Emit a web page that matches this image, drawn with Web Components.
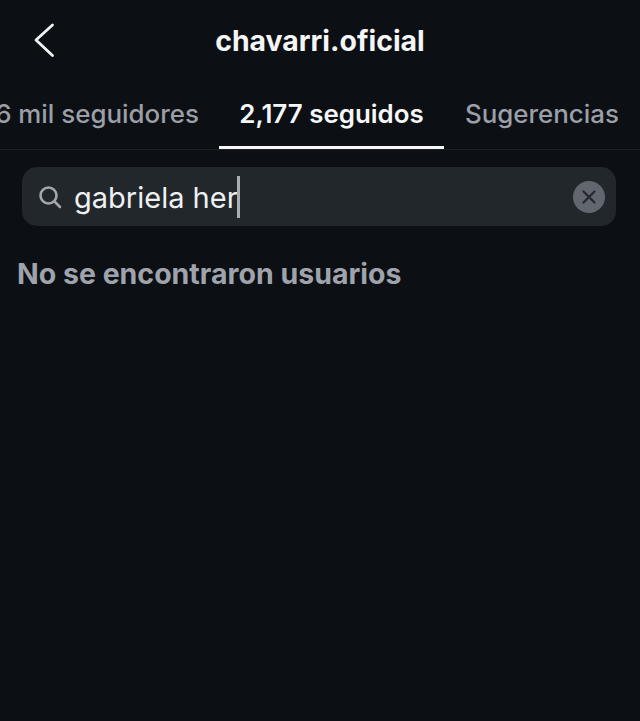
<!DOCTYPE html>
<html>
<head>
<meta charset="utf-8">
<style>
  html, body { margin: 0; height: 100%; background: #0c0f13; overflow: hidden; }
  body { font-family: Inter, "Noto Sans", sans-serif; }
</style>
</head>
<body>
<follow-screen>
  <top-bar title="chavarri.oficial"></top-bar>
  <tab-strip>
    <tab-item style="--w:198px;margin-left:-2px">6 mil seguidores</tab-item>
    <tab-item active style="--w:225px;margin-left:23px">2,177 seguidos</tab-item>
    <tab-item style="--w:154px;margin-left:21px">Sugerencias</tab-item>
  </tab-strip>
  <search-box value="gabriela her"></search-box>
  <empty-note>No se encontraron usuarios</empty-note>
</follow-screen>

<script>
class FollowScreen extends HTMLElement {
  constructor() {
    super();
    this.attachShadow({ mode: "open" });
    this.shadowRoot.innerHTML = `
      <style>
        :host { display: flex; flex-direction: column; width: 640px; height: 721px; overflow: hidden; }
      </style>
      <slot></slot>
    `;
  }
}

class TopBar extends HTMLElement {
  constructor() {
    super();
    this.attachShadow({ mode: "open" });
  }

  connectedCallback() {
    const title = this.getAttribute("title") || "";
    this.shadowRoot.innerHTML = `
      <style>
        :host { display: flex; align-items: center; justify-content: center; height: 81px; position: relative; flex: none; }
        svg { position: absolute; left: 32px; top: 22px; }
        h1 { margin: 0; font-size: 28.4px; font-weight: 700; color: #f4f5f7; letter-spacing: 0; }
      </style>
      <svg width="24" height="36" viewBox="0 0 24 36" fill="none">
        <path d="M20.5 3 L4 18 L20.5 33.5" stroke="#f2f3f5" stroke-width="2.8" stroke-linecap="round" stroke-linejoin="round"/>
      </svg>
      <h1>${title}</h1>
    `;
  }
}

class TabStrip extends HTMLElement {
  constructor() {
    super();
    this.attachShadow({ mode: "open" });
    this.shadowRoot.innerHTML = `
      <style>
        :host { display: flex; height: 68px; border-bottom: 1px solid #1c1f24; flex: none; overflow: hidden; }
      </style>
      <slot></slot>
    `;
  }
}

class TabItem extends HTMLElement {
  constructor() {
    super();
    this.attachShadow({ mode: "open" });
    this.shadowRoot.innerHTML = `
      <style>
        :host {
          display: flex; align-items: flex-start; justify-content: center; box-sizing: border-box; flex: none;
          width: var(--w); height: 68px; padding-top: 17px;
          font-size: 25.9px; font-weight: 500; color: #9b9fa8; white-space: nowrap;
          border-bottom: 3px solid transparent;
        }
        :host([active]) { color: #f5f6f8; border-bottom-color: #f5f6f8; font-weight: 600; }
      </style>
      <slot></slot>
    `;
  }
}

class SearchBox extends HTMLElement {
  constructor() {
    super();
    this.attachShadow({ mode: "open" });
  }

  connectedCallback() {
    const value = this.getAttribute("value") || "";
    this.shadowRoot.innerHTML = `
      <style>
        :host {
          display: flex; align-items: center; flex: none; box-sizing: border-box;
          margin: 17px 24px 0 22px; height: 59px; padding: 0 11px 0 16px;
          background: #22272c; border-radius: 15px;
        }
        .value { font-size: 29px; font-weight: 400; color: #eef0f2; margin-left: 12px; white-space: nowrap; line-height: 37px; padding-top: 1px; }
        .caret { width: 3px; height: 42px; background: #a9adb4; margin-left: -1px; }
        .clear { margin-left: auto; }
      </style>
      <svg width="24" height="24" viewBox="0 0 24 24" fill="none">
        <circle cx="10.5" cy="10.5" r="8" stroke="#a3a7ad" stroke-width="2.6"/>
        <path d="M16.5 16.5 L22 22" stroke="#a3a7ad" stroke-width="2.6" stroke-linecap="round"/>
      </svg>
      <span class="value">${value}</span><span class="caret"></span>
      <svg class="clear" width="32" height="32" viewBox="0 0 32 32" fill="none">
        <circle cx="16" cy="16" r="16" fill="#62666e"/>
        <path d="M10.5 10.5 L21.5 21.5 M21.5 10.5 L10.5 21.5" stroke="#24282d" stroke-width="2.2" stroke-linecap="round"/>
      </svg>
    `;
  }
}

class EmptyNote extends HTMLElement {
  constructor() {
    super();
    this.attachShadow({ mode: "open" });
    this.shadowRoot.innerHTML = `
      <style>
        :host { display: block; margin: 31px 0 0 17px; font-size: 28.5px; font-weight: 700; color: #9fa3ac; line-height: 34px; }
      </style>
      <slot></slot>
    `;
  }
}

customElements.define("follow-screen", FollowScreen);
customElements.define("top-bar", TopBar);
customElements.define("tab-strip", TabStrip);
customElements.define("tab-item", TabItem);
customElements.define("search-box", SearchBox);
customElements.define("empty-note", EmptyNote);
</script>
</body>
</html>
